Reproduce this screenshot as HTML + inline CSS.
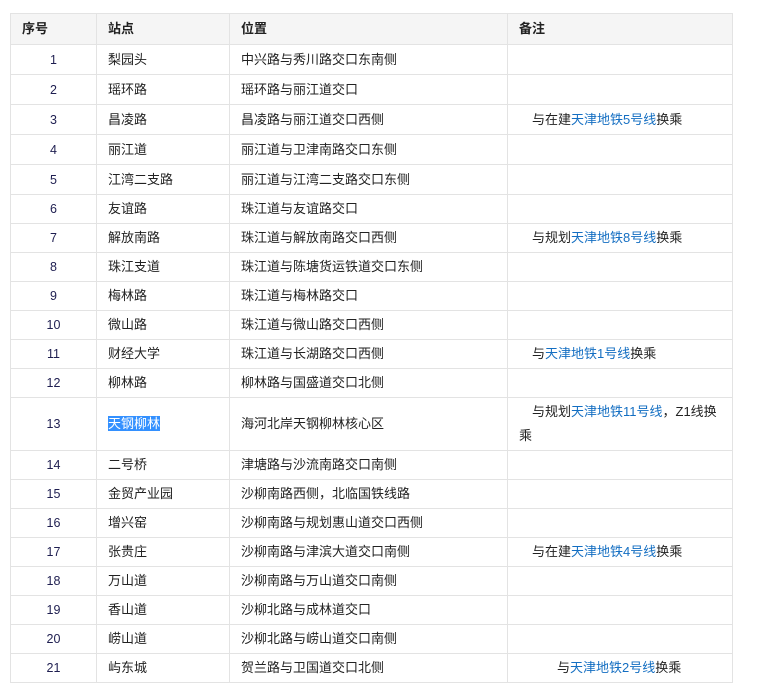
<!DOCTYPE html>
<html><head><meta charset="utf-8"><style>
body{margin:0;background:#fff;font-family:"Liberation Sans","Noto Sans CJK SC",sans-serif;font-size:13px;color:#222;}
table{position:absolute;left:10px;top:13px;border-collapse:collapse;width:722px;table-layout:fixed;}
td,th{border:1px solid #e3e3e3;padding:0 0 0 11px;text-align:left;height:28px;line-height:24px;white-space:nowrap;}
th{background:#f5f5f5;font-weight:bold;height:30px;}
td.n{text-align:center;padding:0;color:#1e1e50;font-size:12.5px;}
a{color:#136ec2;text-decoration:none;}
.i{padding-left:24px;}
.sel{background:#3390ff;color:#fff;}
tr.t td{height:29px;}
</style></head><body>
<table>
<colgroup><col style="width:86px"><col style="width:133px"><col style="width:278px"><col style="width:225px"></colgroup>
<tr><th>序号</th><th>站点</th><th>位置</th><th>备注</th></tr>
<tr class="t"><td class="n">1</td><td>梨园头</td><td>中兴路与秀川路交口东南侧</td><td></td></tr>
<tr class="t"><td class="n">2</td><td>瑶环路</td><td>瑶环路与丽江道交口</td><td></td></tr>
<tr class="t"><td class="n">3</td><td>昌凌路</td><td>昌凌路与丽江道交口西侧</td><td class="i">与在建<a>天津地铁5号线</a>换乘</td></tr>
<tr class="t"><td class="n">4</td><td>丽江道</td><td>丽江道与卫津南路交口东侧</td><td></td></tr>
<tr class="t"><td class="n">5</td><td>江湾二支路</td><td>丽江道与江湾二支路交口东侧</td><td></td></tr>
<tr><td class="n">6</td><td>友谊路</td><td>珠江道与友谊路交口</td><td></td></tr>
<tr><td class="n">7</td><td>解放南路</td><td>珠江道与解放南路交口西侧</td><td class="i">与规划<a>天津地铁8号线</a>换乘</td></tr>
<tr><td class="n">8</td><td>珠江支道</td><td>珠江道与陈塘货运铁道交口东侧</td><td></td></tr>
<tr><td class="n">9</td><td>梅林路</td><td>珠江道与梅林路交口</td><td></td></tr>
<tr><td class="n">10</td><td>微山路</td><td>珠江道与微山路交口西侧</td><td></td></tr>
<tr><td class="n">11</td><td>财经大学</td><td>珠江道与长湖路交口西侧</td><td class="i">与<a>天津地铁1号线</a>换乘</td></tr>
<tr><td class="n">12</td><td>柳林路</td><td>柳林路与国盛道交口北侧</td><td></td></tr>
<tr><td class="n" style="height:52px">13</td><td><span class="sel">天钢柳林</span></td><td>海河北岸天钢柳林核心区</td><td style="text-indent:13px">与规划<a>天津地铁11号线</a>，Z1线换<br>乘</td></tr>
<tr><td class="n">14</td><td>二号桥</td><td>津塘路与沙流南路交口南侧</td><td></td></tr>
<tr><td class="n">15</td><td>金贸产业园</td><td>沙柳南路西侧，北临国铁线路</td><td></td></tr>
<tr><td class="n">16</td><td>增兴窑</td><td>沙柳南路与规划惠山道交口西侧</td><td></td></tr>
<tr><td class="n">17</td><td>张贵庄</td><td>沙柳南路与津滨大道交口南侧</td><td class="i">与在建<a>天津地铁4号线</a>换乘</td></tr>
<tr><td class="n">18</td><td>万山道</td><td>沙柳南路与万山道交口南侧</td><td></td></tr>
<tr><td class="n">19</td><td>香山道</td><td>沙柳北路与成林道交口</td><td></td></tr>
<tr><td class="n">20</td><td>崂山道</td><td>沙柳北路与崂山道交口南侧</td><td></td></tr>
<tr><td class="n">21</td><td>屿东城</td><td>贺兰路与卫国道交口北侧</td><td style="padding-left:49px">与<a>天津地铁2号线</a>换乘</td></tr>
</table>
</body></html>
